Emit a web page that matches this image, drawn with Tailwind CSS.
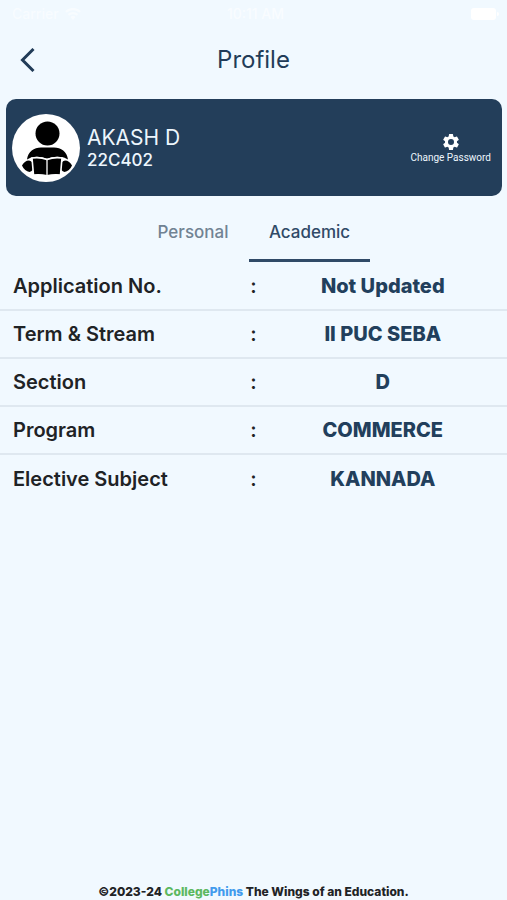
<!DOCTYPE html>
<html lang="en">
<head>
  <meta charset="UTF-8" />
  <meta name="viewport" content="width=device-width, initial-scale=1.0"/>
  <title>Profile</title>
  <script src="https://cdn.jsdelivr.net/npm/@tailwindcss/browser@4"></script>
</head>
<body class="min-h-screen flex flex-col bg-[#f1f9ff] text-[#1f2326] font-['Inter',sans-serif]">

  <!-- Status bar -->
  <div class="grid grid-cols-3 items-center h-7 pl-3 pr-2 text-white text-sm font-medium">
    <div class="flex items-center gap-1 text-white/50">
      <span>Carrier</span>
      <svg class="w-5 h-3" viewBox="0 0 20 14" fill="currentColor" aria-hidden="true">
        <path d="M10 14 7 10.500a4.500 4.500 0 0 1 6 0zM5.500 9 3.800 7a9 9 0 0 1 12.400 0l-1.700 2a6.500 6.500 0 0 0-9 0zM2.500 5.500.8 3.500a13.500 13.500 0 0 1 18.400 0l-1.700 2a11 11 0 0 0-15 0z"/>
      </svg>
    </div>
    <div class="text-center text-white/60">10:11 AM</div>
    <div class="flex justify-end">
      <svg class="w-7 h-3" viewBox="0 0 28 12" fill="currentColor" aria-hidden="true">
        <rect x="0" y="0" width="25" height="12" rx="3"/>
        <path d="M26 4v4a2 2 0 0 0 0-4z"/>
      </svg>
    </div>
  </div>

  <!-- Header -->
  <header class="grid grid-cols-[1fr_auto_1fr] items-center h-16 px-4 text-[#223c58]">
    <button type="button" aria-label="Back" class="w-6 h-8 flex items-center justify-center">
      <svg class="w-6 h-6" viewBox="0 0 24 24" fill="none" stroke="currentColor" stroke-width="3" aria-hidden="true">
        <path d="M17.500 1 6.500 12l11 11"/>
      </svg>
    </button>
    <h1 class="text-2xl">Profile</h1>
  </header>

  <main class="flex-1">
    <!-- Student card -->
    <section class="flex items-center ml-[6px] mr-[5px] mt-[7px] h-[97px] pl-[6px] pr-[11px] gap-[7px] rounded-[10px] bg-[#233e5a] text-[#edf6fd]">
      <svg class="w-[68px] h-[68px] shrink-0" viewBox="0 0 68 68" role="img" aria-label="Student">
        <circle cx="34" cy="34" r="34" fill="#fff"/>
        <circle cx="35.500" cy="19.500" r="12"/>
        <path d="M15 45.500C16 37.500 22 33.500 29 33.500h13c7 0 13 4 14 12l-4-2c-6-1.500-11-1-17 1.200-6-2.200-11-2.700-16-1.200z"/>
        <path d="M10 51.500c1.500-3 4-5 7-5 3 .5 4.500 3 4.500 6s-1.500 5-4 5.500c-3-.5-6-3-7.500-6.500z"/>
        <path d="M60 51.500c-1.500-3-4-5-7-5-3 .5-4.500 3-4.500 6s1.500 5 4 5.500c3-.5 6-3 7.500-6.500z"/>
        <path d="M20 44c5-.8 10-.5 15 1.500 5-2 10-2.300 15-1.500l-1.500 17c-5-.5-9-.3-13.500.8-4.500-1.100-8.500-1.300-13.500-.8z" stroke="#fff" stroke-width="1.600"/>
        <path d="M35 45.500v16.500" stroke="#fff" stroke-width="1.300"/>
      </svg>
      <div class="flex-1">
        <p class="text-[21px] leading-6">AKASH D</p>
        <p class="text-[17px] leading-5 font-medium">22C402</p>
      </div>
      <button type="button" class="flex flex-col items-center text-[10px] leading-3 font-['Roboto',sans-serif]">
        <svg class="w-5 h-5" viewBox="0 0 24 24" fill="#fff" aria-hidden="true">
          <path d="M19.140 12.940c.04-.3.060-.61.060-.94s-.02-.64-.07-.94l2.030-1.580a.49.49 0 0 0 .12-.61l-1.920-3.320a.49.49 0 0 0-.59-.22l-2.390.96a7 7 0 0 0-1.620-.94l-.36-2.540a.48.48 0 0 0-.48-.41h-3.840a.48.48 0 0 0-.47.41l-.36 2.540c-.59.24-1.130.57-1.620.94l-2.390-.96a.48.48 0 0 0-.59.22L2.740 8.870a.47.47 0 0 0 .12.610l2.030 1.580c-.05.3-.09.63-.09.94s.02.64.07.94l-2.030 1.580a.49.49 0 0 0-.12.610l1.920 3.320c.12.22.37.29.59.22l2.390-.96c.5.38 1.030.7 1.620.94l.36 2.540c.05.24.24.41.48.41h3.840c.24 0 .44-.17.47-.41l.36-2.540a7 7 0 0 0 1.620-.94l2.390.96c.22.08.47 0 .59-.22l1.920-3.320a.47.47 0 0 0-.12-.61zM12 15.600a3.600 3.600 0 1 1 0-7.200 3.600 3.600 0 0 1 0 7.200z"/>
        </svg>
        Change Password
      </button>
    </section>

    <!-- Tabs -->
    <div role="tablist" class="flex justify-center mt-1 text-[17px] font-medium">
      <button type="button" role="tab" aria-selected="false" class="w-[112px] h-[62px] pt-1.5 border-b-3 border-transparent text-[#718393]">Personal</button>
      <button type="button" role="tab" aria-selected="true" class="w-[121px] h-[62px] pt-1.5 border-b-3 border-[#304a67] text-[#304a67]">Academic</button>
    </div>

    <!-- Academic details -->
    <table class="w-full table-fixed text-xl">
      <colgroup>
        <col class="w-[49%]"/>
        <col class="w-[2%]"/>
        <col class="w-[49%]"/>
      </colgroup>
      <tbody class="divide-y-2 divide-[#dfe8f0]">
        <tr class="h-12">
          <th scope="row" class="pl-[13px] text-left font-semibold">Application No.</th>
          <td class="text-center font-semibold">:</td>
          <td class="text-center font-extrabold text-[#223f5c]">Not Updated</td>
        </tr>
        <tr class="h-12">
          <th scope="row" class="pl-[13px] text-left font-semibold">Term &amp; Stream</th>
          <td class="text-center font-semibold">:</td>
          <td class="text-center font-extrabold text-[#223f5c]">II PUC SEBA</td>
        </tr>
        <tr class="h-12">
          <th scope="row" class="pl-[13px] text-left font-semibold">Section</th>
          <td class="text-center font-semibold">:</td>
          <td class="text-center font-extrabold text-[#223f5c]">D</td>
        </tr>
        <tr class="h-12">
          <th scope="row" class="pl-[13px] text-left font-semibold">Program</th>
          <td class="text-center font-semibold">:</td>
          <td class="text-center font-extrabold text-[#223f5c]">COMMERCE</td>
        </tr>
        <tr class="h-12">
          <th scope="row" class="pl-[13px] text-left font-semibold">Elective Subject</th>
          <td class="text-center font-semibold">:</td>
          <td class="text-center font-extrabold text-[#223f5c]">KANNADA</td>
        </tr>
      </tbody>
    </table>
  </main>

  <footer class="text-center text-xs font-extrabold">
    ©2023-24 <span class="text-[#5cb860]">College</span><span class="text-[#429bed]">Phins</span> The Wings of an Education.
  </footer>

</body>
</html>
